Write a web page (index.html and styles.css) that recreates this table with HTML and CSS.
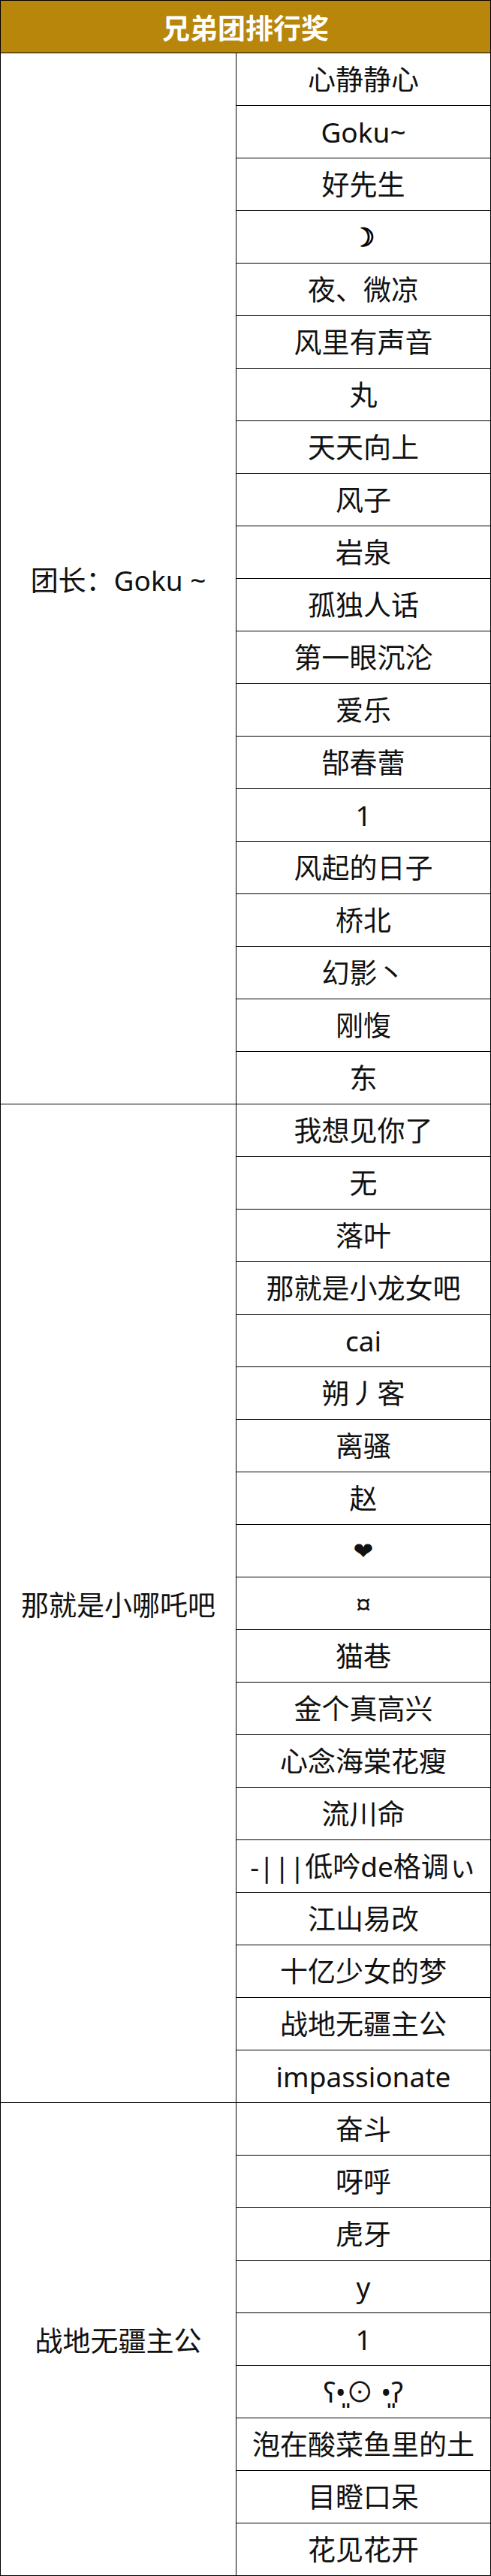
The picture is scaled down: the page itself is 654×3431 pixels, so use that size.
FILE: index.html
```html
<!DOCTYPE html>
<html lang="zh-CN">
<head>
<meta charset="utf-8">
<title>兄弟团排行奖</title>
<link rel="stylesheet" href="styles.css">
</head>
<body>
<div class="board">
  <div class="board-title">兄弟团排行奖</div>

  <div class="group">
    <div class="leader">团长：Goku ~</div>
    <div class="members">
      <div class="member">心静静心</div>
      <div class="member">Goku~</div>
      <div class="member">好先生</div>
      <div class="member moon">☽</div>
      <div class="member">夜、微凉</div>
      <div class="member">风里有声音</div>
      <div class="member">丸</div>
      <div class="member">天天向上</div>
      <div class="member">风子</div>
      <div class="member">岩泉</div>
      <div class="member">孤独人话</div>
      <div class="member">第一眼沉沦</div>
      <div class="member">爱乐</div>
      <div class="member">郜春蕾</div>
      <div class="member">1</div>
      <div class="member">风起的日子</div>
      <div class="member">桥北</div>
      <div class="member">幻影丶</div>
      <div class="member">刚愎</div>
      <div class="member">东</div>
    </div>
  </div>

  <div class="group">
    <div class="leader">那就是小哪吒吧</div>
    <div class="members">
      <div class="member">我想见你了</div>
      <div class="member">无</div>
      <div class="member">落叶</div>
      <div class="member">那就是小龙女吧</div>
      <div class="member">cai</div>
      <div class="member">朔丿客</div>
      <div class="member">离骚</div>
      <div class="member">赵</div>
      <div class="member sym">❤</div>
      <div class="member">¤</div>
      <div class="member">猫巷</div>
      <div class="member">金个真高兴</div>
      <div class="member">心念海棠花瘦</div>
      <div class="member">流川命</div>
      <div class="member">-|||低吟de格调ぃ</div>
      <div class="member">江山易改</div>
      <div class="member">十亿少女的梦</div>
      <div class="member">战地无疆主公</div>
      <div class="member">impassionate</div>
    </div>
  </div>

  <div class="group">
    <div class="leader">战地无疆主公</div>
    <div class="members">
      <div class="member">奋斗</div>
      <div class="member">呀呼</div>
      <div class="member">虎牙</div>
      <div class="member">y</div>
      <div class="member">1</div>
      <div class="member">ʕ•͈⊙ •͈ʔ</div>
      <div class="member">泡在酸菜鱼里的土豆丝</div>
      <div class="member">目瞪口呆</div>
      <div class="member">花见花开</div>
    </div>
  </div>
</div>
</body>
</html>
```

FILE: styles.css
```css
html, body {
  margin: 0;
  padding: 0;
  background: #ffffff;
}

body {
  font-family: "Noto Sans", "Noto Sans CJK SC", "DejaVu Sans", sans-serif;
  color: #111111;
}

.board {
  width: 654px;
  box-sizing: border-box;
  border-left: 1px solid #000;
  border-right: 1px solid #000;
}

.board-title {
  height: 71px;
  box-sizing: border-box;
  border-top: 1px solid #000;
  border-bottom: 1px solid #000;
  background: #b8860b;
  color: #ffffff;
  font-weight: 700;
  font-size: 37px;
  display: flex;
  align-items: center;
  justify-content: center;
}

.group {
  display: grid;
  grid-template-columns: 314px 1fr;
}

.leader {
  border-right: 1px solid #000;
  border-bottom: 1px solid #000;
  display: flex;
  align-items: center;
  justify-content: center;
  font-size: 37px;
  text-align: center;
}

.members {
  display: flex;
  flex-direction: column;
}

.member {
  height: 70px;
  box-sizing: border-box;
  border-bottom: 1px solid #000;
  padding: 9px 6px 0;
  font-size: 37px;
  line-height: 52px;
  text-align: center;
  overflow: hidden;
}

.sym {
  font-family: "DejaVu Sans", "Noto Sans CJK SC", sans-serif;
  font-size: 32px;
}

.moon {
  font-family: "DejaVu Sans", sans-serif;
  font-size: 34px;
  color: #000000;
  -webkit-text-stroke: 1.4px #000000;
}
```
